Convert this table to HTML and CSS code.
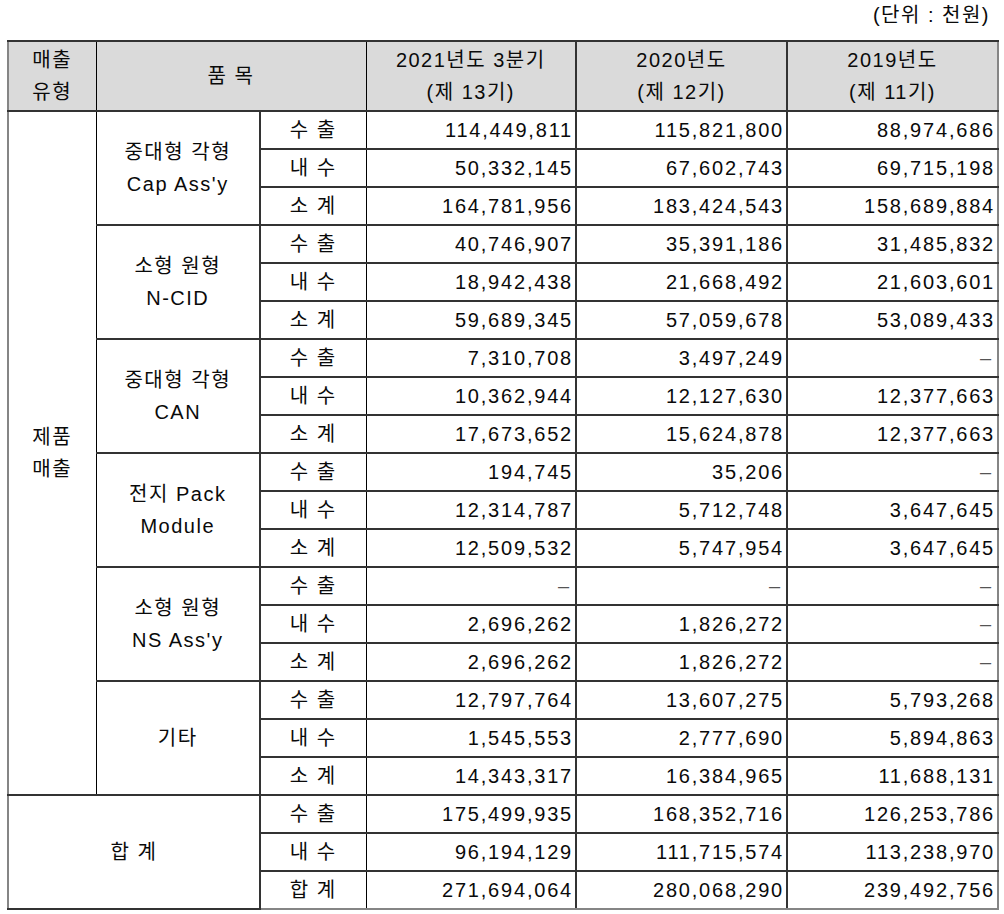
FILE: index.html
```html
<!DOCTYPE html>
<html lang="ko">
<head>
<meta charset="utf-8">
<title>매출 실적</title>
<link rel="stylesheet" href="styles.css">
</head>
<body>
<div class="page">
  <div class="unit">(단위 : 천원)</div>
  <table class="sales">
    <colgroup>
      <col class="c1"><col class="c2"><col class="c3"><col class="c4"><col class="c5"><col class="c6">
    </colgroup>
    <thead>
      <tr class="head">
        <th class="vl1">매출<br>유형</th>
        <th colspan="2" class="vl3">품 목</th>
        <th class="vl4">2021년도 3분기<br>(제 13기)</th>
        <th class="vl5">2020년도<br>(제 12기)</th>
        <th>2019년도<br>(제 11기)</th>
      </tr>
    </thead>
    <tbody>
      <tr>
        <td rowspan="18" class="type vl1">제품<br>매출</td>
        <td rowspan="3" class="item">중대형 각형<br>Cap Ass'y</td>
        <td class="lbl">수 출</td><td class="num">114,449,811</td><td class="num">115,821,800</td><td class="num">88,974,686</td>
      </tr>
      <tr><td class="lbl">내 수</td><td class="num">50,332,145</td><td class="num">67,602,743</td><td class="num">69,715,198</td></tr>
      <tr><td class="lbl">소 계</td><td class="num">164,781,956</td><td class="num">183,424,543</td><td class="num">158,689,884</td></tr>

      <tr><td rowspan="3" class="item">소형 원형<br>N-CID</td>
        <td class="lbl">수 출</td><td class="num">40,746,907</td><td class="num">35,391,186</td><td class="num">31,485,832</td></tr>
      <tr><td class="lbl">내 수</td><td class="num">18,942,438</td><td class="num">21,668,492</td><td class="num">21,603,601</td></tr>
      <tr><td class="lbl">소 계</td><td class="num">59,689,345</td><td class="num">57,059,678</td><td class="num">53,089,433</td></tr>

      <tr><td rowspan="3" class="item">중대형 각형<br>CAN</td>
        <td class="lbl">수 출</td><td class="num">7,310,708</td><td class="num">3,497,249</td><td class="num dash">–</td></tr>
      <tr><td class="lbl">내 수</td><td class="num">10,362,944</td><td class="num">12,127,630</td><td class="num">12,377,663</td></tr>
      <tr><td class="lbl">소 계</td><td class="num">17,673,652</td><td class="num">15,624,878</td><td class="num">12,377,663</td></tr>

      <tr><td rowspan="3" class="item">전지 Pack<br>Module</td>
        <td class="lbl">수 출</td><td class="num">194,745</td><td class="num">35,206</td><td class="num dash">–</td></tr>
      <tr><td class="lbl">내 수</td><td class="num">12,314,787</td><td class="num">5,712,748</td><td class="num">3,647,645</td></tr>
      <tr><td class="lbl">소 계</td><td class="num">12,509,532</td><td class="num">5,747,954</td><td class="num">3,647,645</td></tr>

      <tr><td rowspan="3" class="item">소형 원형<br>NS Ass'y</td>
        <td class="lbl">수 출</td><td class="num dash">–</td><td class="num dash">–</td><td class="num dash">–</td></tr>
      <tr><td class="lbl">내 수</td><td class="num">2,696,262</td><td class="num">1,826,272</td><td class="num dash">–</td></tr>
      <tr><td class="lbl">소 계</td><td class="num">2,696,262</td><td class="num">1,826,272</td><td class="num dash">–</td></tr>

      <tr><td rowspan="3" class="item">기타</td>
        <td class="lbl">수 출</td><td class="num">12,797,764</td><td class="num">13,607,275</td><td class="num">5,793,268</td></tr>
      <tr><td class="lbl">내 수</td><td class="num">1,545,553</td><td class="num">2,777,690</td><td class="num">5,894,863</td></tr>
      <tr><td class="lbl">소 계</td><td class="num">14,343,317</td><td class="num">16,384,965</td><td class="num">11,688,131</td></tr>

      <tr><td rowspan="3" colspan="2" class="total">합 계</td>
        <td class="lbl">수 출</td><td class="num">175,499,935</td><td class="num">168,352,716</td><td class="num">126,253,786</td></tr>
      <tr><td class="lbl">내 수</td><td class="num">96,194,129</td><td class="num">111,715,574</td><td class="num">113,238,970</td></tr>
      <tr class="last"><td class="lbl">합 계</td><td class="num">271,694,064</td><td class="num">280,068,290</td><td class="num">239,492,756</td></tr>
    </tbody>
  </table>
</div>
</body>
</html>
```
FILE: styles.css
```css
html, body {
  margin: 0;
  padding: 0;
  background: #ffffff;
}
body {
  font-family: "Liberation Sans", "Noto Sans CJK KR", sans-serif;
  color: #0a0a0a;
}
.page {
  width: 990px;
  padding-left: 7px;
}
.unit {
  height: 40px;
  line-height: 30px;
  text-align: right;
  padding-right: 7px;
  font-size: 20px;
  letter-spacing: 1.5px;
  box-sizing: border-box;
}
.sales {
  width: 990px;
  border-collapse: collapse;
  table-layout: fixed;
  font-size: 20px;
  letter-spacing: 1.5px;
  border-top: 2px solid #333;
  border-left: 2px solid #858585;
  border-right: 2px solid #858585;
  border-bottom: 2px solid #858585;
}
.c1 { width: 88px; }
.c2 { width: 164px; }
.c3 { width: 106px; }
.c4 { width: 210px; }
.c5 { width: 211px; }
.c6 { width: 211px; }

.sales th,
.sales td {
  padding: 0;
  border-top: 2px solid #333;
  border-bottom: 2px solid #333;
  border-left: 1px solid #000;
  border-right: 1px solid #000;
  font-weight: normal;
  text-align: center;
  vertical-align: middle;
}
.head th {
  background: #dadada;
  height: 68px;
  line-height: 32px;
  padding-top: 0;
}
.sales tbody tr {
  height: 38px;
}
.sales td {
  line-height: 32px;
}
.lbl {
  border-left: 2px solid #333 !important;
  border-right: 1px solid #000;
}
.num {
  text-align: right !important;
  padding-right: 2px !important;
  font-size: 20px;
  letter-spacing: 1.8px;
}
.sales td.num:nth-last-child(2),
.sales td.num:nth-last-child(3) {
  border-right: 2px solid #333;
}
.dash {
  color: #555;
  letter-spacing: 0;
  padding-right: 6px !important;
}
.vl3 { border-right: 1px solid #000; }
.vl4, .vl5 { border-right: 2px solid #333 !important; }
.type { border-right: 1px solid #000; }
.sales tbody tr.last td { border-bottom: 2px solid #858585; }
```
